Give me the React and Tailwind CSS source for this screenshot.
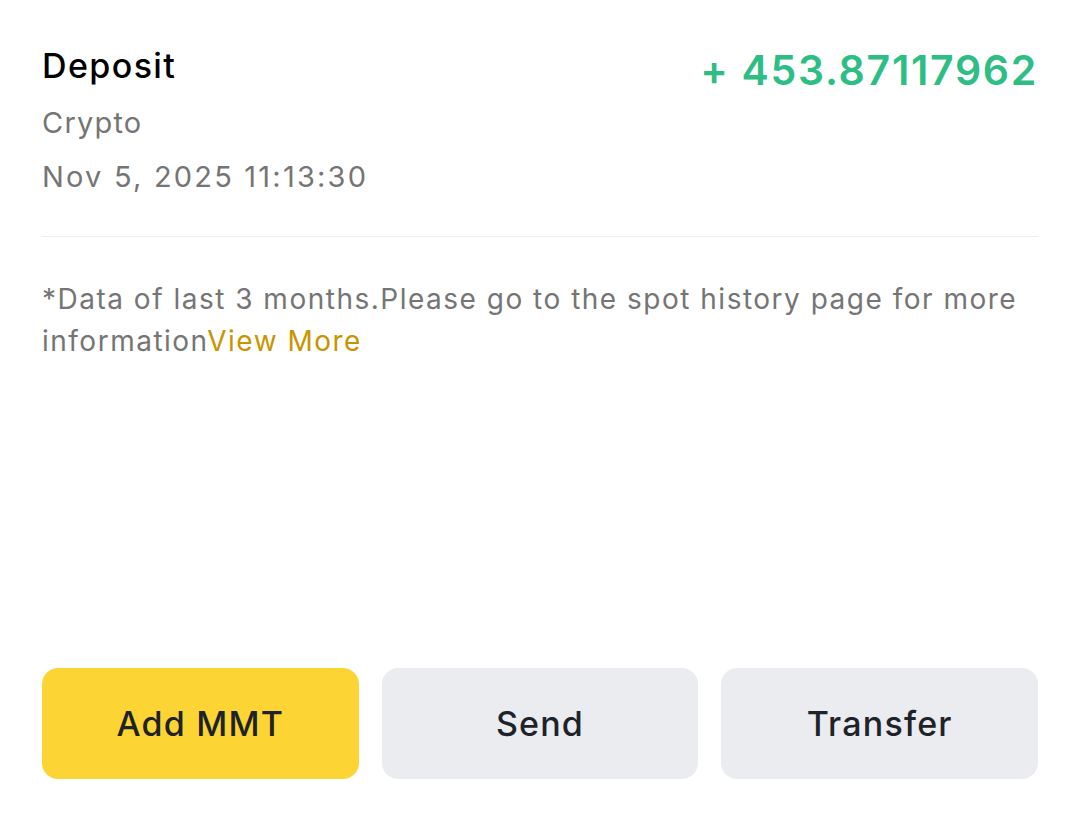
import React from "react";

export default function App() {
  return (
    <div
      className="w-[1080px] h-[813px] bg-white flex flex-col px-[42px]"
      style={{ fontFamily: "Inter, 'Open Sans', sans-serif" }}
    >
      <div className="flex justify-between pt-[40px]">
        <div className="flex flex-col">
          <div className="text-[34px] leading-[52px] font-medium tracking-[1.4px] text-black">Deposit</div>
          <div className="text-[29px] leading-[40px] mt-[11px] tracking-[1.2px] text-[#757575]">Crypto</div>
          <div className="text-[29px] leading-[40px] mt-[14px] tracking-[2.2px] text-[#757575]">Nov 5, 2025 11:13:30</div>
        </div>
        <div className="text-[41px] leading-[60px] font-semibold tracking-[1.7px] text-[#2ebd85]">+ 453.87117962</div>
      </div>
      <div className="h-px bg-[#eeeeee] mt-[39px]" />
      <p className="mt-[41px] text-[28px] leading-[42px] tracking-[1.5px] text-[#757575]">
        *Data of last 3 months.Please go to the spot history page for more information
        <span className="text-[#c99400]">View More</span>
      </p>
      <div className="flex-1" />
      <div className="grid grid-cols-3 gap-[23px] mb-[34px]">
        <button className="h-[111px] rounded-[16px] bg-[#fcd535] text-[#1e2329] text-[34px] font-medium tracking-[1.2px]">Add MMT</button>
        <button className="h-[111px] rounded-[16px] bg-[#eaecef] text-[#1e2329] text-[34px] font-medium tracking-[1.2px]">Send</button>
        <button className="h-[111px] rounded-[16px] bg-[#eaecef] text-[#1e2329] text-[34px] font-medium tracking-[1.2px]">Transfer</button>
      </div>
    </div>
  );
}
